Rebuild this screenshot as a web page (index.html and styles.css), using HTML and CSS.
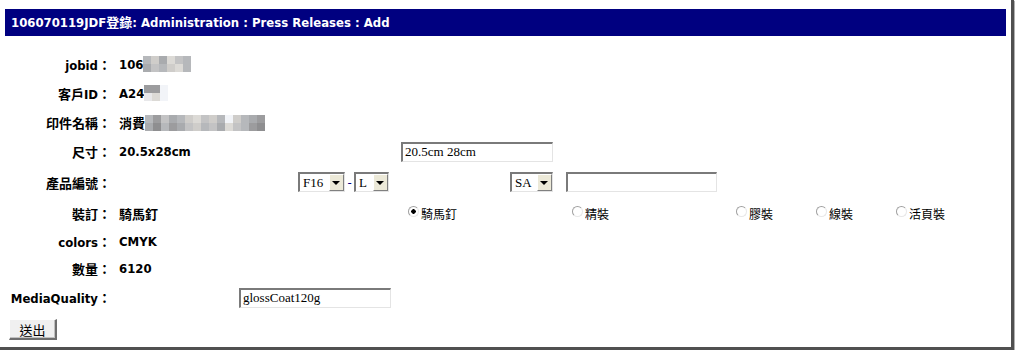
FILE: index.html
```html
<!DOCTYPE html>
<html lang="zh-Hant">
<head>
    <meta charset="UTF-8">
    <title>JDF登錄</title>
    <link rel="stylesheet" href="styles.css">
</head>
<body>
<div class="frame">
    <div class="titlebar">106070119JDF登錄: Administration : Press Releases : Add</div>

    <div class="form">
        <div class="row r-jobid">
            <span class="label">jobid：</span>
            <span class="value">106<span class="mosaic w6">
                <i class="g3"></i><i class="g5"></i><i class="g2"></i><i class="g6"></i><i class="g4"></i><i class="g3"></i>
                <i class="g2"></i><i class="g4"></i><i class="g3"></i><i class="g5"></i><i class="g6"></i><i class="g3"></i>
            </span></span>
        </div>
        <div class="row r-client">
            <span class="label">客戶ID：</span>
            <span class="value">A24<span class="mosaic w3">
                <i class="g1"></i><i class="g1"></i><i class="g7"></i>
                <i class="g8"></i><i class="g6"></i><i class="g7"></i>
            </span></span>
        </div>
        <div class="row r-name">
            <span class="label">印件名稱：</span>
            <span class="value">消費<span class="mosaic w15">
                <i class="g3"></i><i class="g1"></i><i class="g4"></i><i class="g2"></i><i class="g3"></i><i class="g5"></i><i class="g6"></i><i class="g4"></i><i class="g5"></i><i class="g3"></i><i class="g7"></i><i class="g5"></i><i class="g3"></i><i class="g2"></i><i class="g1"></i>
                <i class="g2"></i><i class="g0"></i><i class="g3"></i><i class="g1"></i><i class="g2"></i><i class="g4"></i><i class="g5"></i><i class="g3"></i><i class="g4"></i><i class="g2"></i><i class="g6"></i><i class="g4"></i><i class="g3"></i><i class="g1"></i><i class="g0"></i>
            </span></span>
        </div>
        <div class="row r-size">
            <span class="label">尺寸：</span>
            <span class="value">20.5x28cm</span>
            <input class="textbox" type="text" value="20.5cm 28cm">
        </div>
        <div class="row r-product">
            <span class="label">產品編號：</span>
            <span class="value"></span>
            <span class="pick-group">
                <span class="pick"><select class="pick-f"><option>F16</option></select></span>
                <span class="dash">-</span>
                <span class="pick"><select class="pick-l"><option>L</option></select></span>
            </span>
            <span class="pick"><select class="pick-sa"><option>SA</option></select></span>
            <input class="textbox code-box" type="text" value="">
        </div>
        <div class="row r-binding">
            <span class="label">裝訂：</span>
            <span class="value">騎馬釘</span>
            <label class="opt o-wide"><input type="radio" name="bind" checked>騎馬釘</label>
            <label class="opt o-wide"><input type="radio" name="bind">精裝</label>
            <label class="opt o-narrow"><input type="radio" name="bind">膠裝</label>
            <label class="opt o-narrow"><input type="radio" name="bind">線裝</label>
            <label class="opt"><input type="radio" name="bind">活頁裝</label>
        </div>
        <div class="row r-colors">
            <span class="label">colors：</span>
            <span class="value">CMYK</span>
        </div>
        <div class="row r-qty">
            <span class="label">數量：</span>
            <span class="value">6120</span>
        </div>
        <div class="row r-media">
            <span class="label">MediaQuality：</span>
            <span class="value"></span>
            <input class="textbox" type="text" value="glossCoat120g">
        </div>
        <div class="actions">
            <button class="submit" type="button">送出</button>
        </div>
    </div>
</div>
</body>
</html>
```

FILE: styles.css
```css
body {
    margin: 0;
    background-color: #ffffff;
    font-family: "DejaVu Sans Condensed", "DejaVu Sans", Tahoma, "Noto Sans CJK TC", sans-serif;
}
.frame {
    box-sizing: border-box;
    width: 1014px;
    height: 350px;
    padding-top: 9px;
    background-color: #ffffff;
    border-right: 3px solid #505050;
    border-bottom: 3px solid #505050;
    box-shadow: 1px 1px 1px #b0b0b0;
}
.titlebar {
    margin-left: 5px;
    width: 1001px;
    height: 27px;
    line-height: 27px;
    padding-left: 6px;
    box-sizing: border-box;
    background-color: #000080;
    color: white;
    font-weight: bold;
    font-size: 13px;
}
.form {
    margin-top: 14px;
    font-size: 13px;
    font-weight: bold;
    color: #000000;
}
.row {
    display: flex;
    align-items: center;
    height: 29px;
}
.r-jobid { height: 28px; }
.r-client { height: 30px; }
.r-product { height: 32px; }
.r-binding { height: 31px; }
.r-colors { height: 25px; }
.r-qty { height: 28px; }
.r-media { height: 31px; }
.label {
    width: 111px;
    text-align: right;
    color: #000000;
}
.value {
    padding-left: 8px;
    display: inline-flex;
    align-items: center;
}
.r-size .value { width: 282px; }
.r-product .value { width: 179px; }
.r-binding .value { width: 286px; }
.r-media .value { width: 120px; }
.mosaic {
    display: inline-grid;
    grid-auto-rows: 8px;
    grid-template-columns: repeat(var(--cols), 8px);
}
.mosaic.w6 { --cols: 6; }
.mosaic.w3 { --cols: 3; }
.mosaic.w15 { --cols: 15; }
.mosaic i { display: block; }
.g0 { background-color: #8e8e90; }
.g1 { background-color: #9c9c9e; }
.g2 { background-color: #a9abae; }
.g3 { background-color: #b6b8bb; }
.g4 { background-color: #c3c3c4; }
.g5 { background-color: #cfcdca; }
.g6 { background-color: #dcdad6; }
.g7 { background-color: #f2f4f8; }
.g8 { background-color: #e8e8ea; }
.textbox {
    box-sizing: border-box;
    width: 152px;
    height: 20px;
    margin: 0;
    padding: 0 2px;
    border-style: solid;
    border-width: 2px 1px 1px 2px;
    border-color: #7a7a7a #e4e4e4 #e4e4e4 #7a7a7a;
    font-family: "Liberation Serif", "Noto Sans CJK TC", serif;
    font-size: 13px;
    color: #000000;
    outline: none;
}
.code-box { width: 151px; margin-left: 13px; }
.pick-group {
    display: inline-flex;
    align-items: center;
    width: 212px;
}
.dash {
    font-weight: normal;
    color: #000080;
    width: 9px;
    text-align: center;
}
.pick {
    position: relative;
    display: inline-block;
}
.pick select {
    appearance: none;
    -webkit-appearance: none;
    box-sizing: border-box;
    height: 20px;
    margin: 0;
    padding: 0 0 0 3px;
    border-style: solid;
    border-width: 2px 1px 1px 2px;
    border-color: #7a7a7a #e4e4e4 #e4e4e4 #7a7a7a;
    border-radius: 0;
    background-color: #ffffff;
    font-family: "Liberation Serif", serif;
    font-size: 13px;
    color: #000000;
}
.pick-f { width: 47px; }
.pick-l { width: 35px; }
.pick-sa { width: 43px; }
.pick::after {
    content: "";
    position: absolute;
    right: 1px;
    top: 2px;
    width: 15px;
    height: 17px;
    box-sizing: border-box;
    border-style: solid;
    border-width: 1px;
    border-color: #ffffff #808080 #808080 #ffffff;
    background-color: #ece9d8;
    pointer-events: none;
}
.pick::before {
    content: "";
    position: absolute;
    right: 5px;
    top: 9px;
    border-left: 4px solid transparent;
    border-right: 4px solid transparent;
    border-top: 4px solid #000000;
    z-index: 1;
    pointer-events: none;
}
.opt {
    display: inline-flex;
    align-items: center;
    font-family: "Noto Sans CJK TC", sans-serif;
    font-weight: normal;
    font-size: 12px;
    color: #000000;
}
.o-wide { width: 164px; }
.o-narrow { width: 80px; }
.opt input {
    appearance: none;
    -webkit-appearance: none;
    width: 11px;
    height: 11px;
    margin: 0 2px 5px 3px;
    border-radius: 50%;
    border: 1px solid #a0a0a0;
    border-right-color: #e8e8e8;
    border-bottom-color: #e8e8e8;
    background-color: #ffffff;
    box-sizing: border-box;
}
.opt input:checked {
    background: radial-gradient(circle, #000000 0 2px, #ffffff 2.5px);
}
.actions {
    margin-top: 6px;
    padding-left: 9px;
}
.submit {
    box-sizing: border-box;
    width: 48px;
    height: 21px;
    padding: 0;
    border-style: solid;
    border-width: 1px 2px 2px 1px;
    border-color: #ffffff #6e6e6e #6e6e6e #ffffff;
    background-color: #f0f0f0;
    font-family: "Noto Sans CJK TC", sans-serif;
    font-size: 13px;
    color: #000000;
    box-shadow: inset -1px -1px 0 #c0c0c0;
}
```
